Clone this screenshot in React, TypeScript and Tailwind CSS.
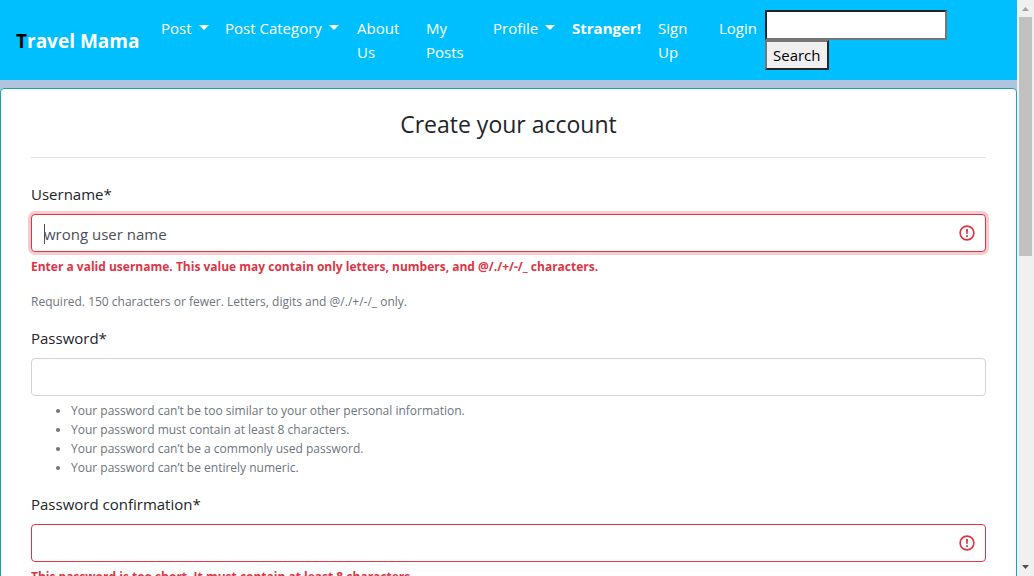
import type { ReactNode } from "react";

function NavItem({ children, width, caret, bold }: { children: ReactNode; width: string; caret?: boolean; bold?: boolean }) {
  return (
    <li className={`shrink-0 ${width}`}>
      <a href="#" className={`block p-2 pr-0 whitespace-nowrap ${bold ? "font-bold" : ""}`}>
        {children}
        {caret && (
          <span className="ml-[7px] inline-block border-x-5 border-t-5 border-x-transparent border-t-white align-[4px]" />
        )}
      </a>
    </li>
  );
}

function AlertIcon() {
  return (
    <svg viewBox="0 0 16 16" className="pointer-events-none absolute top-[11px] right-[11px] size-4" fill="none" aria-hidden="true">
      <circle cx="8" cy="8" r="6.900" stroke="#dc3545" strokeWidth="1.600" />
      <path d="M7 4h2l-.3 5H7.300z" fill="#dc3545" />
      <rect x="7.100" y="10.200" width="1.800" height="1.800" fill="#dc3545" />
    </svg>
  );
}

function Field({ id, label, type, value, state, children }: {
  id: string; label: string; type: string; value?: string; state: "normal" | "invalid" | "focused"; children: ReactNode;
}) {
  const look = {
    normal: "border-[#ced4da]",
    invalid: "border-[#dc3545]",
    focused: "border-[#dc3545] ring-3 ring-[#dc3545]/25",
  }[state];
  return (
    <div className="mb-[15px]">
      <label htmlFor={id} className="mb-2 block leading-6">{label}</label>
      <div className="relative">
        <input id={id} type={type} defaultValue={value} className={`block h-[38px] w-full rounded border bg-white px-3 pt-0.5 text-[#495057] outline-none ${look}`} />
        {state === "focused" && <span className="absolute top-[10px] left-[13px] h-5 w-px bg-[#495057]" />}
        {state !== "normal" && <AlertIcon />}
      </div>
      {children}
    </div>
  );
}

function ScrollRail() {
  return (
    <div className="flex w-[17px] shrink-0 flex-col items-center justify-between bg-[#f0f0f0]" aria-hidden="true">
      <div className="flex w-full flex-col items-center">
        <svg viewBox="0 0 17 17" className="size-[17px]"><path d="M5 11h7L8.500 7z" fill="#a3a3a3" /></svg>
        <div className="h-[239px] w-[13px] bg-[#c1c1c1]" />
      </div>
      <svg viewBox="0 0 17 17" className="size-[17px]"><path d="M5 6h7l-3.500 4z" fill="#505050" /></svg>
    </div>
  );
}

const rules = [
  "Your password can’t be too similar to your other personal information.",
  "Your password must contain at least 8 characters.",
  "Your password can’t be a commonly used password.",
  "Your password can’t be entirely numeric.",
];

export default function App() {
  return (
    <div className="flex h-screen overflow-hidden bg-[#b0c4de] font-['Open_Sans','Noto_Sans',sans-serif] text-[15px] leading-6 text-[#212529]">
      <div className="min-w-0 flex-1">
        <nav className="flex items-center bg-[#00bfff] px-4 py-2 text-white">
          <a href="#" className="w-[137px] shrink-0 pt-0.5 text-[19px] font-bold whitespace-nowrap">
            <span className="text-black">T</span>ravel Mama
          </a>
          <ul className="flex">
            <NavItem width="w-16" caret>Post</NavItem>
            <NavItem width="w-[132px]" caret>Post Category</NavItem>
            <NavItem width="w-[69px]">About<br />Us</NavItem>
            <NavItem width="w-[67px]">My<br />Posts</NavItem>
            <NavItem width="w-[79px]" caret>Profile</NavItem>
            <NavItem width="w-[86px]" bold>Stranger!</NavItem>
            <NavItem width="w-[61px]">Sign<br />Up</NavItem>
            <NavItem width="w-[54px]">Login</NavItem>
          </ul>
          <form className="flex flex-col items-start" onSubmit={(e) => e.preventDefault()}>
            <input aria-label="Search posts" type="text" className="h-[30px] w-[182px] border-2 border-t-[#212529] border-r-[#767676] border-b-[#767676] border-l-[#212529] bg-white px-0.5 text-black outline-none" />
            <button className="h-[30px] border-2 border-t-[#767676] border-r-[#212529] border-b-[#212529] border-l-[#767676] bg-[#efefef] px-1.5 leading-6 text-black">Search</button>
          </form>
        </nav>
        <main className="mt-2 rounded border border-[#17a2b8] bg-white px-[30px] pt-[21px] pb-8">
          <h1 className="mb-[18px] text-center text-[23px] leading-[29px]">Create your account</h1>
          <hr className="mb-6 border-[#dee2e6]" />
          <form>
            <Field id="username" label="Username*" type="text" value="wrong user name" state="focused">
              <p className="mt-[5px] mb-4 text-[12px] leading-[19px] font-bold text-[#dc3545]">
                Enter a valid username. This value may contain only letters, numbers, and @/./+/-/_ characters.
              </p>
              <p className="text-[12px] leading-[19px] text-[#6c757d]">
                Required. 150 characters or fewer. Letters, digits and @/./+/-/_ only.
              </p>
            </Field>
            <Field id="password" label="Password*" type="password" state="normal">
              <ul className="mt-[5px] list-disc pl-10 text-[12px] leading-[19px] text-[#6c757d]">
                {rules.map((rule) => <li key={rule}>{rule}</li>)}
              </ul>
            </Field>
            <Field id="confirmation" label="Password confirmation*" type="password" state="invalid">
              <p className="mt-[5px] text-[12px] leading-[19px] font-bold text-[#dc3545]">
                This password is too short. It must contain at least 8 characters.
              </p>
            </Field>
          </form>
        </main>
      </div>
      <ScrollRail />
    </div>
  );
}
